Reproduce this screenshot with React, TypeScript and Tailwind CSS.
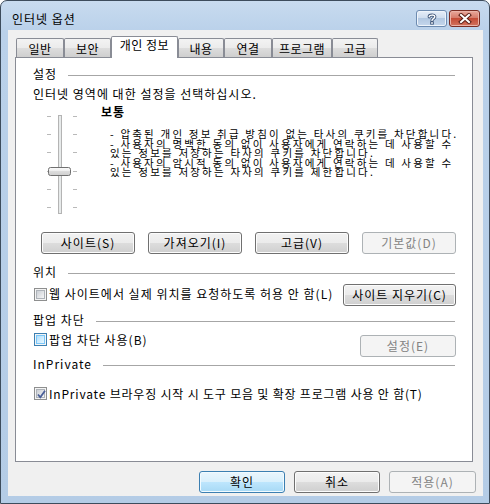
import type { ReactNode } from 'react'

const font = "font-['Noto_Sans_CJK_KR',sans-serif]"

function Btn({ children, w, kind = 'normal', className = '' }: { children: ReactNode; w: string; kind?: 'normal' | 'default' | 'disabled'; className?: string }) {
  const look =
    kind === 'default'
      ? 'border-[#3c7fb1] bg-[linear-gradient(to_bottom,#eaf6fd_0%,#d9f0fc_50%,#bee6fd_50%,#a7d9f5_100%)] shadow-[inset_0_0_0_1px_#f2fbff] text-black'
      : kind === 'disabled'
        ? 'border-[#adb2b5] bg-[#f4f4f4] text-[#838383]'
        : 'border-[#707070] bg-[linear-gradient(to_bottom,#f2f2f2_0%,#ebebeb_50%,#dddddd_50%,#cfcfcf_100%)] shadow-[inset_0_0_0_1px_#fcfcfc] text-black'
  return (
    <div className={`${w} h-[22px] shrink-0 flex items-center justify-center rounded-[3px] border text-[12px] leading-[14px] ${look} ${className}`}>
      {children}
    </div>
  )
}

function Check({ state }: { state: 'off' | 'hover' | 'on' }) {
  const outer = state === 'hover' ? 'border-[#3c7fb1]' : 'border-[#8e8f8f]'
  const inner =
    state === 'hover'
      ? 'bg-[linear-gradient(135deg,#b1dffd,#e9f7fe)] border-[#79c6f9]'
      : 'bg-[linear-gradient(135deg,#cbcfd5,#f6f6f6)] border-[#aeb3b9]'
  return (
    <div className={`relative w-[13px] h-[13px] shrink-0 border ${outer} bg-[#f4f4f4] p-[1px]`}>
      <div className={`w-full h-full border ${inner}`} />
      {state === 'on' && (
        <svg className="absolute left-0 top-0" width="13" height="13" viewBox="0 0 13 13">
          <path d="M3 6.5 L5.3 9.3 L10 2.8" fill="none" stroke="#4a5f97" strokeWidth="1.8" />
        </svg>
      )}
    </div>
  )
}

function Group({ label, className = '' }: { label: string; className?: string }) {
  return (
    <div className={`flex items-center h-[14px] text-[12px] leading-[14px] ${className}`}>
      <span className="whitespace-nowrap">{label}</span>
      <div className="flex-1 h-px bg-[#a6a6a6] ml-[11px] mt-[2px]" />
    </div>
  )
}

function Tab({ label, w, selected = false }: { label: string; w: string; selected?: boolean }) {
  if (selected)
    return (
      <div className={`${w} relative z-10 -mb-px h-[22px] flex justify-center border border-b-0 border-[#898c95] bg-white rounded-t-[2px] text-[12px] leading-[14px] pt-px`}>
        {label}
      </div>
    )
  return (
    <div className={`${w} h-[19px] flex items-center justify-center border border-b-0 border-[#898c95] bg-[linear-gradient(to_bottom,#f3f3f3_0%,#ebebeb_50%,#dddddd_50%,#cfcfcf_100%)] rounded-t-[2px] text-[12px] leading-[14px] pt-[2px]`}>
      {label}
    </div>
  )
}

function Slider() {
  const ticks = [15, 33, 51, 70, 88, 106]
  return (
    <svg width="40" height="131" viewBox="0 0 40 131" className="shrink-0 ml-[7px]">
      <rect x="18.5" y="14.5" width="3" height="98" fill="#e7eaea" stroke="#b4b4b4" />
      {ticks.map((t) => (
        <g key={t}>
          <line x1="7" y1={t + 0.5} x2="11" y2={t + 0.5} stroke="#b9b9b9" />
          <line x1="33" y1={t + 0.5} x2="37" y2={t + 0.5} stroke="#b9b9b9" />
        </g>
      ))}
      <defs>
        <linearGradient id="thumb" x1="0" y1="0" x2="0" y2="1">
          <stop offset="0" stopColor="#fbfbfb" />
          <stop offset="0.5" stopColor="#ececec" />
          <stop offset="0.5" stopColor="#dcdcdc" />
          <stop offset="1" stopColor="#cfcfcf" />
        </linearGradient>
      </defs>
      <rect x="8.5" y="66.5" width="22" height="8" rx="2" fill="url(#thumb)" stroke="#707070" />
    </svg>
  )
}

export default function App() {
  return (
    <div className={`w-[490px] h-[504px] bg-white ${font} tracking-[1px] text-black select-none`}>
      <div className="w-full h-full flex flex-col rounded-t-[7px] border border-[#3d4c5c] bg-[linear-gradient(to_bottom,#c8dbef_0px,#bad1ea_30px,#b4cce6_100%)]">
        {/* Title bar */}
        <div className="h-[29px] shrink-0 flex items-start">
          <div className="pl-[11px] pt-[11px] text-[12px] leading-[14px] flex-1">인터넷 옵션</div>
          <div className="flex gap-[2px] pt-[9px] pr-[9px]">
            <div className="w-[31px] h-[17px] rounded-[3px] border border-[#6d8bb0] bg-[linear-gradient(to_bottom,#e6eef8_0%,#cddcee_50%,#b2c8e2_50%,#c5d7ec_100%)] shadow-[inset_0_0_0_1px_#eef4fb] flex items-center justify-center">
              <svg width="10" height="12" viewBox="0 0 10 12">
                <path d="M2.2 3.8 C2.2 1.6 7.8 1.4 7.8 3.8 C7.8 5.6 5 5.6 5 7.4" fill="none" stroke="#3e5578" strokeWidth="3.2" strokeLinecap="round" />
                <rect x="3.2" y="8.4" width="3.6" height="3.2" fill="#3e5578" />
                <path d="M2.2 3.8 C2.2 1.6 7.8 1.4 7.8 3.8 C7.8 5.6 5 5.6 5 7.4" fill="none" stroke="#ffffff" strokeWidth="1.4" strokeLinecap="round" />
                <rect x="4.2" y="9.2" width="1.6" height="1.6" fill="#ffffff" />
              </svg>
            </div>
            <div className="w-[31px] h-[17px] rounded-[3px] border border-[#7a2d24] bg-[linear-gradient(to_bottom,#e9a99c_0%,#d47766_50%,#c44c37_50%,#d2735e_100%)] shadow-[inset_0_0_0_1px_#eab3a8] flex items-center justify-center">
              <svg width="14" height="11" viewBox="0 0 14 11">
                <path d="M3 2 L11 9 M11 2 L3 9" stroke="#5a1e16" strokeWidth="4" strokeLinecap="square" />
                <path d="M3 2 L11 9 M11 2 L3 9" stroke="#ffffff" strokeWidth="2" strokeLinecap="square" />
              </svg>
            </div>
          </div>
        </div>

        {/* Client area */}
        <div className="ml-[7px] mr-[6px] mb-[7px] flex-1 bg-[#f0f0f0] flex flex-col">
          <div className="h-[27px] pt-[6px] pl-[8px] flex items-end tracking-[0.5px]">
            <Tab label="일반" w="w-[48px]" />
            <Tab label="보안" w="w-[47px]" />
            <Tab label="개인 정보" w="w-[67px]" selected />
            <Tab label="내용" w="w-[46px]" />
            <Tab label="연결" w="w-[48px]" />
            <Tab label="프로그램" w="w-[60px]" />
            <Tab label="고급" w="w-[46px]" />
          </div>

          <div className="ml-[7px] w-[458px] h-[405px] border border-[#898c95] bg-white pl-[17px] pr-[17px] pt-[9px] flex flex-col text-[12px] leading-[14px]">
            <Group label="설정" />
            <div className="mt-[6px] h-[14px] whitespace-nowrap">인터넷 영역에 대한 설정을 선택하십시오.</div>

            <div className="h-[131px] flex">
              <Slider />
              <div className="ml-[21px] flex flex-col">
                <div className="mt-[4px] h-[14px] font-bold">보통</div>
                <div className="mt-[10px] ml-[9px] text-[10.5px] leading-[9.6px] tracking-[2.2px] whitespace-nowrap">
                  <div>- 압축된 개인 정보 취급 방침이 없는 타사의 쿠키를 차단합니다.</div>
                  <div>- 사용자의 명백한 동의 없이 사용자에게 연락하는 데 사용할 수</div>
                  <div>있는 정보를 저장하는 타사의 쿠키를 차단합니다.</div>
                  <div>- 사용자의 암시적 동의 없이 사용자에게 연락하는 데 사용할 수</div>
                  <div>있는 정보를 저장하는 자사의 쿠키를 제한합니다.</div>
                </div>
              </div>
            </div>

            <div className="ml-[8px] -mr-px flex gap-[13px]">
              <Btn w="w-[94px]">사이트(S)</Btn>
              <Btn w="w-[94px]">가져오기(I)</Btn>
              <Btn w="w-[94px]">고급(V)</Btn>
              <Btn w="w-[94px]" kind="disabled">기본값(D)</Btn>
            </div>

            <Group label="위치" className="mt-[11px]" />
            <div className="mt-[5px] h-[22px] -mr-px flex items-center">
              <div className="flex items-center gap-[2px] ml-px flex-1 -mt-[2px]">
                <Check state="off" />
                <span className="whitespace-nowrap">웹 사이트에서 실제 위치를 요청하도록 허용 안 함(L)</span>
              </div>
              <Btn w="w-[113px]">사이트 지우기(C)</Btn>
            </div>

            <Group label="팝업 차단" className="mt-[7px]" />
            <div className="mt-[6px] h-[24px] -mr-px flex items-start">
              <div className="flex items-center gap-[2px] ml-px flex-1 h-[13px]">
                <Check state="hover" />
                <span className="whitespace-nowrap">팝업 차단 사용(B)</span>
              </div>
              <Btn w="w-[96px]" kind="disabled" className="mt-[2px]">설정(E)</Btn>
            </div>

            <Group label="InPrivate" />
            <div className="mt-[16px] h-[13px] flex items-center gap-[2px] ml-px">
              <Check state="on" />
              <span className="whitespace-nowrap tracking-[0.8px]">InPrivate 브라우징 시작 시 도구 모음 및 확장 프로그램 사용 안 함(T)</span>
            </div>
          </div>

          <div className="mt-[9px] pr-[7px] flex justify-end gap-[9px]">
            <Btn w="w-[86px]" kind="default">확인</Btn>
            <Btn w="w-[86px]">취소</Btn>
            <Btn w="w-[87px]" kind="disabled">적용(A)</Btn>
          </div>
        </div>
      </div>
    </div>
  )
}
